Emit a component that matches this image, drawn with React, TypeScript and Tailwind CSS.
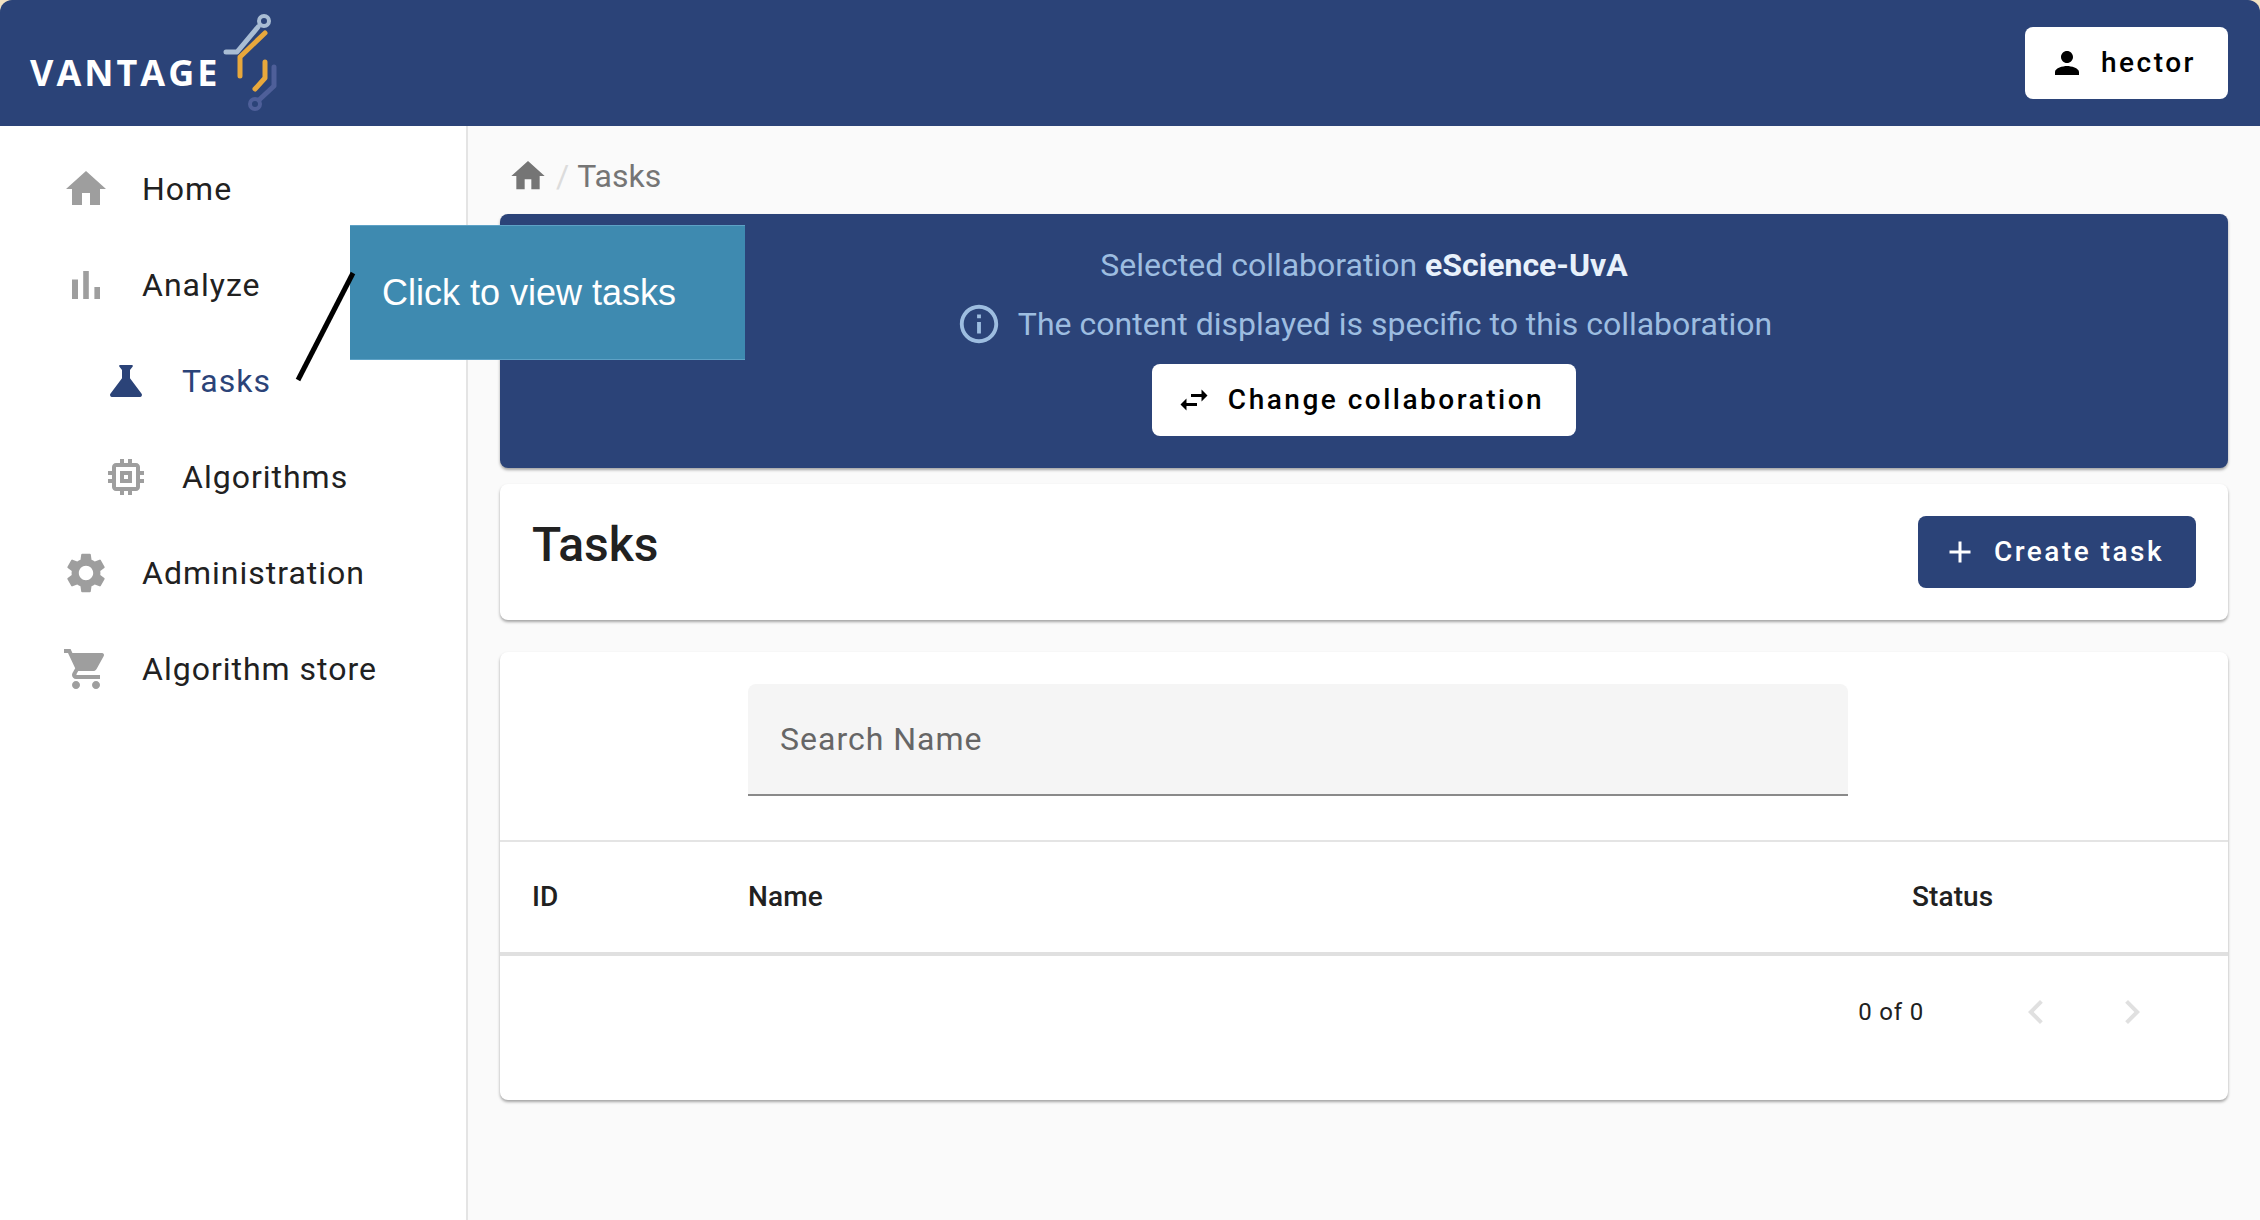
import React from "react";
import { MdHome, MdScience, MdOutlineMemory, MdSettings, MdShoppingCart, MdPerson, MdSwapHoriz, MdAdd, MdInfoOutline, MdChevronLeft, MdChevronRight } from "react-icons/md";

function Logo() {
  return (
    <svg width="60" height="104" viewBox="220 8 60 104" className="block">
      <circle cx="264" cy="21" r="5" fill="none" stroke="#a9bdd4" strokeWidth="4" />
      <path d="M258 27 L237 52 H226" fill="none" stroke="#a9bdd4" strokeWidth="5" strokeLinecap="round" strokeLinejoin="round" />
      <path d="M265 33 L240 57 V76" fill="none" stroke="#e8a83c" strokeWidth="5" strokeLinecap="round" strokeLinejoin="round" />
      <path d="M265 62 V78 L255 89" fill="none" stroke="#e8a83c" strokeWidth="5" strokeLinecap="round" strokeLinejoin="round" />
      <path d="M274 67 V86 L259 100" fill="none" stroke="#4e5f99" strokeWidth="5" strokeLinecap="round" strokeLinejoin="round" />
      <circle cx="255" cy="104" r="5" fill="none" stroke="#4e5f99" strokeWidth="4" />
    </svg>
  );
}

function BarChartIcon() {
  return (
    <svg width="48" height="48" viewBox="0 0 24 24" fill="currentColor">
      <path d="M5 9.2h3V19H5zM10.6 5h2.8v14h-2.8zm5.6 8H19v6h-2.8z" />
    </svg>
  );
}

function NavRow({ icon, label, sub, active }: { icon: React.ReactNode; label: string; sub?: boolean; active?: boolean }) {
  return (
    <div className={`flex h-24 items-center ${sub ? "pl-[102px]" : "pl-[62px]"} ${active ? "text-[#2b4378]" : "text-[#212121]"}`}>
      <span className={`flex w-12 justify-center ${active ? "text-[#2b4378]" : "text-[#9e9e9e]"}`}>{icon}</span>
      <span className="ml-8 text-[32px] leading-none tracking-[1px]">{label}</span>
    </div>
  );
}

export default function App() {
  return (
    <div className="relative flex h-[1220px] w-[2260px] flex-col overflow-hidden bg-[#f3e3c3] font-['Roboto',sans-serif]">
      <header className="flex h-[126px] shrink-0 items-center justify-between rounded-t-[12px] bg-[#2b4378] pl-[30px] pr-8">
        <div className="flex h-full items-start">
          <span className="mt-[55px] w-[190px] text-[36px] font-bold leading-none tracking-[3px] text-white font-['Open_Sans',sans-serif]">VANTAGE</span>
          <div className="mt-2">
            <Logo />
          </div>
        </div>
        <button className="flex h-[72px] w-[203px] items-center justify-start gap-4 rounded-lg bg-white pl-6 text-[28px] font-medium tracking-[2.5px] text-black">
          <MdPerson size={36} />
          hector
        </button>
      </header>
      <div className="flex min-h-0 flex-1 bg-[#fafafa]">
        <aside className="w-[468px] shrink-0 border-r-2 border-[#e4e4e4] bg-white pt-[15px]">
          <NavRow icon={<MdHome size={48} />} label="Home" />
          <NavRow icon={<BarChartIcon />} label="Analyze" />
          <NavRow icon={<MdScience size={48} />} label="Tasks" sub active />
          <NavRow icon={<MdOutlineMemory size={48} />} label="Algorithms" sub />
          <NavRow icon={<MdSettings size={48} />} label="Administration" />
          <NavRow icon={<MdShoppingCart size={48} />} label="Algorithm store" />
        </aside>
        <main className="min-w-0 flex-1 pl-8 pr-8">
          <div className="flex h-[88px] items-center pl-[8px] pt-[12px] text-[32px] text-[#757575]">
            <MdHome size={40} className="text-[#757575]" />
            <span className="mx-2 text-[#dcdcdc]">/</span>
            <span>Tasks</span>
          </div>
          <section className="flex h-[254px] flex-col items-center rounded-lg bg-[#2b4378] pt-[32px] text-[32px] text-[#9dbde0] shadow-[0_2px_3px_rgba(0,0,0,0.35)]">
            <div className="h-[38px] leading-[38px]">Selected collaboration <b className="font-bold text-[#e8f1fb]">eScience-UvA</b></div>
            <div className="mt-[21px] flex h-[38px] items-center gap-[16px]">
              <MdInfoOutline size={46} />
              <span>The content displayed is specific to this collaboration</span>
            </div>
            <button className="mt-[21px] flex h-[72px] w-[424px] items-center justify-center gap-[16px] rounded-lg bg-white pr-2 text-[28px] font-medium tracking-[2.5px] text-black">
              <MdSwapHoriz size={36} />
              Change collaboration
            </button>
          </section>
          <section className="mt-4 flex h-[136px] items-start justify-between rounded-lg bg-white pl-8 pr-8 pt-8 shadow-[0_2px_3px_rgba(0,0,0,0.35)]">
            <h1 className="-mt-[1px] text-[48px] font-medium leading-[60px] text-[#212121]">Tasks</h1>
            <button className="flex h-[72px] w-[278px] items-center justify-center gap-[16px] rounded-lg bg-[#2b4378] pr-2 text-[28px] font-medium tracking-[2.5px] text-white">
              <MdAdd size={36} />
              Create task
            </button>
          </section>
          <section className="mt-8 h-[448px] rounded-lg bg-white shadow-[0_2px_3px_rgba(0,0,0,0.35)]">
            <div className="h-[190px] border-b-2 border-[#e4e4e4] pl-[248px] pt-8">
              <div className="flex h-[112px] w-[1100px] items-center rounded-t-lg border-b-2 border-[#8a8a8a] bg-[#f5f5f5] pl-8 text-[32px] tracking-[1px] text-[#666666]">
                Search Name
              </div>
            </div>
            <div className="flex h-[114px] items-center border-b-4 border-[#e0e0e0] text-[28px] font-medium tracking-[0.1px] text-[#212121]">
              <span className="w-[248px] pl-8">ID</span>
              <span className="w-[1164px]">Name</span>
              <span>Status</span>
            </div>
            <div className="flex h-[112px] items-center justify-end pr-[72px] text-[24px] tracking-[0.8px] text-[#212121]">
              <span className="mr-[88px]">0 of 0</span>
              <MdChevronLeft size={48} className="text-[#e0e0e0]" />
              <MdChevronRight size={48} className="ml-[48px] text-[#e0e0e0]" />
            </div>
          </section>
        </main>
      </div>
      <div className="absolute left-[350px] top-[225px] flex h-[135px] w-[395px] items-center border-y border-[#5ea2c6] bg-[#3e8ab0] pl-8 text-[36px] text-white font-['Liberation_Sans',sans-serif]">
        Click to view tasks
      </div>
      <svg className="absolute left-[290px] top-[265px]" width="70" height="125" viewBox="0 0 70 125">
        <line x1="63" y1="8" x2="8" y2="115" stroke="#000" strokeWidth="5" />
      </svg>
    </div>
  );
}
